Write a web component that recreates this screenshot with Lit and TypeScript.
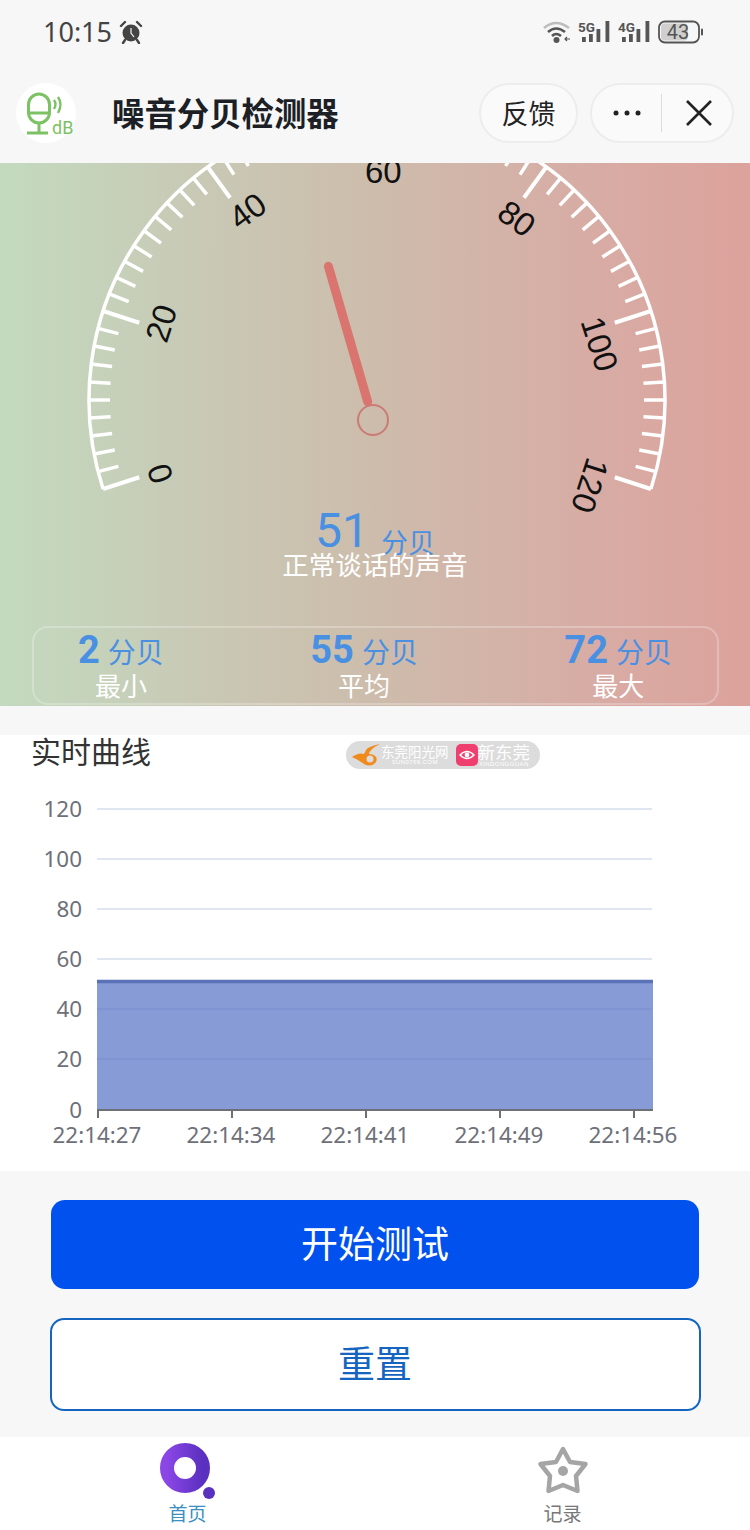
import { LitElement, css, html, svg } from 'lit';
import { customElement } from 'lit/decorators.js';

const CX = 377;
const CY = 400;
const R = 288;
const VALUE = 51;

const polar = (deg: number, r: number) => {
  const a = (deg * Math.PI) / 180;
  return { x: CX + r * Math.cos(a), y: CY - r * Math.sin(a) };
};
const angleOf = (v: number) => 198 - (v / 120) * 216;

const stats = [
  { value: '2', label: '最小' },
  { value: '55', label: '平均' },
  { value: '72', label: '最大' },
];

const yTicks = [
  { label: '120', y: 809 },
  { label: '100', y: 859 },
  { label: '80', y: 909 },
  { label: '60', y: 959 },
  { label: '40', y: 1009 },
  { label: '20', y: 1059 },
  { label: '0', y: 1110 },
];

const xTicks = [
  { label: '22:14:27', x: 98 },
  { label: '22:14:34', x: 232 },
  { label: '22:14:41', x: 366 },
  { label: '22:14:49', x: 500 },
  { label: '22:14:56', x: 634 },
];

const signal = [
  { x: 4, h: 5 },
  { x: 11, h: 8 },
  { x: 18.5, h: 13 },
  { x: 27.5, h: 21 },
];

@customElement('app-root')
export class AppRoot extends LitElement {
  static styles = css`
    :host {
      display: flex;
      flex-direction: column;
      width: 750px;
      height: 1530px;
      overflow: hidden;
      background: #f7f7f7;
      font-family: "Noto Sans CJK SC", "Noto Sans", sans-serif;
    }
    svg { display: block; }

    .status {
      height: 64px;
      display: flex;
      align-items: center;
      justify-content: space-between;
      padding: 0 46px 0 43px;
      color: #444;
    }
    .status-left, .status-right { display: flex; align-items: center; }
    .time { font-family: "Noto Sans", sans-serif; font-size: 27px; line-height: 32px; margin-right: 7px; }
    .status-right { gap: 7px; }

    .nav {
      height: 99px;
      box-sizing: border-box;
      display: flex;
      align-items: center;
      padding: 0 16px 1px 16px;
    }
    .logo {
      width: 60px;
      height: 60px;
      border-radius: 50%;
      background: #fff;
      margin-right: 36px;
      flex: none;
    }
    .nav-title {
      font-size: 32.4px;
      font-weight: 700;
      color: #1c1f26;
      line-height: 40px;
      padding-bottom: 2px;
      flex: 1;
    }
    .pill {
      height: 60px;
      box-sizing: border-box;
      border: 2px solid #ededed;
      border-radius: 30px;
      background: #fafafa;
      display: flex;
      align-items: center;
    }
    .feedback {
      width: 99px;
      justify-content: center;
      font-size: 27px;
      color: #222;
      margin-right: 12px;
      padding-bottom: 2px;
    }
    .capsule { width: 144px; }
    .capsule-cell { width: 70px; display: flex; justify-content: center; }
    .capsule-cell.close { padding-left: 4px; box-sizing: border-box; }
    .divider { width: 1px; height: 38px; background: #dcdcdc; }

    .gauge {
      height: 543px;
      overflow: hidden;
      display: flex;
      flex-direction: column;
      background: linear-gradient(to right, #c3dabf 0%, #c8cab6 25%, #cdbcab 50%, #d6aea6 75%, #dca29c 100%);
    }
    .gauge svg { overflow: visible; flex: none; }
    .reading {
      display: flex;
      justify-content: center;
      align-items: flex-end;
      gap: 12px;
      height: 50px;
      margin-top: 3px;
      color: #4a90e2;
    }
    .reading-value { font-family: Roboto, sans-serif; font-size: 48px; line-height: 50px; }
    .reading-unit { font-size: 27px; line-height: 28px; }
    .reading-text {
      margin-top: -7px;
      text-align: center;
      color: #fff;
      font-size: 26.5px;
      line-height: 30px;
    }
    .stats {
      margin: auto 31px 1px 32px;
      height: 79px;
      box-sizing: border-box;
      border: 2px solid rgba(255, 255, 255, 0.25);
      border-radius: 16px;
      display: flex;
      justify-content: space-between;
      padding: 1px 45px 0 44px;
    }
    .stat { display: flex; flex-direction: column; align-items: center; }
    .stat-top {
      display: flex;
      align-items: baseline;
      gap: 8px;
      color: #4a90e2;
      height: 43px;
      line-height: 43px;
    }
    .stat-value { font-family: Roboto, sans-serif; font-size: 38px; font-weight: 700; }
    .stat-unit { font-size: 28px; }
    .stat-label { color: #fff; font-size: 26px; line-height: 25px; }

    .card {
      margin-top: 29px;
      height: 436px;
      background: #fff;
    }
    .card-head {
      height: 35px;
      display: flex;
      align-items: flex-start;
      padding-left: 31px;
    }
    .card-title { font-size: 30px; line-height: 30px; color: #333; width: 120px; }
    .mark {
      margin: 6px 0 0 195px;
      width: 194px;
      height: 28px;
      box-sizing: border-box;
      border-radius: 14px;
      background: #dcdcdc;
      display: flex;
      align-items: center;
      padding-left: 5px;
      color: #fff;
    }
    .mark-block { display: flex; flex-direction: column; align-items: center; }
    .mark-cn { font-size: 13.5px; line-height: 15px; }
    .mark-cn.big { font-size: 17.5px; line-height: 18px; }
    .mark-en { font-family: "Liberation Sans", sans-serif; font-size: 6px; line-height: 7px; letter-spacing: 0.4px; }
    .mark-eye { margin: 0 0 0 7px; }

    .actions {
      flex: 1;
      display: flex;
      flex-direction: column;
      align-items: center;
      padding-top: 29px;
      gap: 29px;
    }
    .btn {
      box-sizing: border-box;
      display: flex;
      align-items: center;
      justify-content: center;
      border-radius: 14px;
      font-size: 37px;
      padding-bottom: 6px;
    }
    .btn-primary { width: 648px; height: 89px; background: #0051ee; color: #fff; }
    .btn-ghost { width: 651px; height: 93px; background: #fff; border: 2px solid #1565c0; color: #1565c0; }

    .tabs {
      height: 93px;
      background: #fff;
      display: grid;
      grid-template-columns: 375px 375px;
    }
    .tab { display: flex; flex-direction: column; align-items: center; padding-top: 5px; }
    .tab-label { font-size: 19px; line-height: 24px; margin-top: 2px; color: #777; }
    .tab-label.active { color: #3a8fc0; }
  `;

  private renderTicks() {
    const out = [];
    for (let i = 0; i <= 60; i++) {
      const deg = 198 - i * 3.6;
      const major = i % 10 === 0;
      const a = polar(deg, R);
      const b = polar(deg, R - (major ? 38 : 21));
      out.push(svg`<line x1=${a.x} y1=${a.y} x2=${b.x} y2=${b.y} stroke="#fff" stroke-width=${major ? 4 : 3.5}></line>`);
    }
    return out;
  }

  private renderGaugeLabels() {
    const out = [];
    for (let v = 0; v <= 120; v += 20) {
      const deg = angleOf(v);
      const p = polar(deg, 229);
      const rot = 90 - deg;
      out.push(svg`<text x=${p.x} y=${p.y} dx="-12" transform="rotate(${rot} ${p.x} ${p.y})" dominant-baseline="central"
        font-family="Liberation Sans, sans-serif" font-size="33" fill="#111">${v}</text>`);
    }
    return out;
  }

  private renderGauge() {
    const start = polar(198, R);
    const end = polar(-18, R);
    const hubX = 373;
    const hubY = 420;
    const a = (angleOf(VALUE) * Math.PI) / 180;
    return html`
      <svg width="750" height="340" viewBox="0 163 750 340">
        <path d="M${start.x} ${start.y} A${R} ${R} 0 1 1 ${end.x} ${end.y}" fill="none" stroke="#fff" stroke-width="3.5"></path>
        ${this.renderTicks()}
        ${this.renderGaugeLabels()}
        <line x1=${hubX + 19 * Math.cos(a)} y1=${hubY - 19 * Math.sin(a)} x2=${hubX + 160 * Math.cos(a)} y2=${hubY - 160 * Math.sin(a)}
          stroke="#d9746f" stroke-width="9" stroke-linecap="round"></line>
        <circle cx=${hubX} cy=${hubY} r="15" fill="none" stroke="#cb7b74" stroke-width="2"></circle>
      </svg>
    `;
  }

  private renderChart() {
    return html`
      <svg width="750" height="401" viewBox="0 770 750 401">
        ${yTicks.map(t => svg`
          <line x1="97" x2="652" y1=${t.y} y2=${t.y} stroke="#e0e6f1" stroke-width="2"></line>
          <text x="82" y=${t.y - 1} text-anchor="end" dominant-baseline="central" font-family="Noto Sans, sans-serif" font-size="22.4" fill="#6e7079">${t.label}</text>
        `)}
        <rect x="97" y="982" width="556" height="128" fill="#5470c6" fill-opacity="0.7"></rect>
        <line x1="97" x2="653" y1="981.500" y2="981.500" stroke="#5a72b8" stroke-width="3.5"></line>
        <line x1="97" x2="653" y1="1110" y2="1110" stroke="#6e7079" stroke-width="2"></line>
        ${xTicks.map(t => svg`
          <line x1=${t.x} x2=${t.x} y1="1110" y2="1118" stroke="#6e7079" stroke-width="2"></line>
          <text x=${t.x - 1} y="1134" text-anchor="middle" dominant-baseline="central" font-family="Noto Sans, sans-serif" font-size="22.4" fill="#6e7079">${t.label}</text>
        `)}
      </svg>
    `;
  }

  private renderSignal(label: string) {
    return html`
      <svg width="33" height="24" viewBox="0 0 33 24">
        <text x="0" y="12" font-family="Roboto, sans-serif" font-weight="700" font-size="13.5" fill="#555">${label}</text>
        ${signal.map(b => svg`<rect x=${b.x} y=${22 - b.h} width="3.800" height=${b.h} fill="#555"></rect>`)}
      </svg>
    `;
  }

  render() {
    return html`
      <div class="status">
        <div class="status-left">
          <span class="time">10:15</span>
          <svg width="24" height="24" viewBox="0 0 24 24">
            <circle cx="12" cy="13" r="8.5" fill="#444"></circle>
            <path d="M2 6 L6 2 M22 6 L18 2 M6 20 L4 23 M18 20 L20 23" stroke="#444" stroke-width="2.4" stroke-linecap="round"></path>
            <path d="M12 8 V13 L15 17" stroke="#f7f7f7" stroke-width="1.2" fill="none"></path>
          </svg>
        </div>
        <div class="status-right">
          <svg width="28" height="24" viewBox="0 0 28 24">
            <path d="M1 8 Q13 -2 26 8" stroke="#bdbdbd" stroke-width="2.6" fill="none"></path>
            <path d="M5 12 Q13 5 22 12" stroke="#555" stroke-width="2.6" fill="none"></path>
            <path d="M9 16 Q13 12 18 16" stroke="#555" stroke-width="2.6" fill="none"></path>
            <circle cx="13.5" cy="20" r="3" fill="#555"></circle>
            <path d="M22 19 h5 M24 17 l-2 2 2 2" stroke="#555" stroke-width="1.2" fill="none"></path>
          </svg>
          ${this.renderSignal('5G')}
          ${this.renderSignal('4G')}
          <svg width="46" height="24" viewBox="0 0 46 24">
            <rect x="1" y="1.500" width="40" height="21" rx="6" fill="none" stroke="#555" stroke-width="1.800"></rect>
            <rect x="3" y="3.500" width="27" height="17" rx="4" fill="#cfcfcf"></rect>
            <text x="20" y="18.500" text-anchor="middle" font-family="Roboto, sans-serif" font-size="20" fill="#555">43</text>
            <rect x="43" y="8.500" width="2" height="7" rx="1" fill="#555"></rect>
          </svg>
        </div>
      </div>

      <div class="nav">
        <div class="logo">
          <svg width="60" height="60" viewBox="0 0 60 60">
            <rect x="12.500" y="11" width="21" height="29" rx="10.500" fill="none" stroke="#7cc264" stroke-width="3"></rect>
            <path d="M12 30 H34 M23 40 V50 M11 50 H32" stroke="#7cc264" stroke-width="3" fill="none"></path>
            <path d="M38 17 Q41 21 38 26 M42 14 Q47 21 42 30" stroke="#7cc264" stroke-width="2.400" fill="none"></path>
            <text x="36" y="51" font-family="Roboto, sans-serif" font-size="18" fill="#7cc264">dB</text>
          </svg>
        </div>
        <div class="nav-title">噪音分贝检测器</div>
        <div class="pill feedback">反馈</div>
        <div class="pill capsule">
          <div class="capsule-cell">
            <svg width="28" height="6" viewBox="0 0 28 6">
              <circle cx="3" cy="3" r="2.500" fill="#222"></circle>
              <circle cx="14" cy="3" r="2.500" fill="#222"></circle>
              <circle cx="25" cy="3" r="2.500" fill="#222"></circle>
            </svg>
          </div>
          <div class="divider"></div>
          <div class="capsule-cell close">
            <svg width="26" height="26" viewBox="0 0 26 26">
              <path d="M1 1 L25 25 M25 1 L1 25" stroke="#222" stroke-width="2.600"></path>
            </svg>
          </div>
        </div>
      </div>

      <div class="gauge">
        ${this.renderGauge()}
        <div class="reading">
          <span class="reading-value">${VALUE}</span>
          <span class="reading-unit">分贝</span>
        </div>
        <div class="reading-text">正常谈话的声音</div>
        <div class="stats">
          ${stats.map(s => html`
            <div class="stat">
              <div class="stat-top">
                <span class="stat-value">${s.value}</span>
                <span class="stat-unit">分贝</span>
              </div>
              <div class="stat-label">${s.label}</div>
            </div>
          `)}
        </div>
      </div>

      <div class="card">
        <div class="card-head">
          <div class="card-title">实时曲线</div>
          <div class="mark">
            <svg width="30" height="26" viewBox="0 0 30 24">
              <path d="M1 14 Q8 9 13 11 Q15 3 29 1 Q19 6 18 11 Q28 12 25 19 Q20 25 13 21 Q8 17 1 14 Z" fill="#f08a1d"></path>
              <circle cx="19" cy="16" r="3.500" fill="#dcdcdc"></circle>
            </svg>
            <div class="mark-block">
              <span class="mark-cn">东莞阳光网</span>
              <span class="mark-en">SUN0769.COM</span>
            </div>
            <svg class="mark-eye" width="22" height="22" viewBox="0 0 22 22">
              <rect width="22" height="22" rx="5" fill="#ef3f6e"></rect>
              <path d="M4 11 Q11 4 18 11 Q11 18 4 11 Z" fill="none" stroke="#fff" stroke-width="1.400"></path>
              <circle cx="11" cy="11" r="2.400" fill="#fff"></circle>
            </svg>
            <div class="mark-block">
              <span class="mark-cn big">新东莞</span>
              <span class="mark-en">XINDONGGUAN</span>
            </div>
          </div>
        </div>
        ${this.renderChart()}
      </div>

      <div class="actions">
        <div class="btn btn-primary">开始测试</div>
        <div class="btn btn-ghost">重置</div>
      </div>

      <div class="tabs">
        <div class="tab">
          <svg width="60" height="57" viewBox="1 0 60 57">
            <defs>
              <linearGradient id="ring" x1="0" x2="1" y1="0" y2="0">
                <stop offset="0" stop-color="#8b46e6"></stop>
                <stop offset="1" stop-color="#5a30bf"></stop>
              </linearGradient>
            </defs>
            <circle cx="28" cy="26" r="18" fill="none" stroke="url(#ring)" stroke-width="14"></circle>
            <circle cx="52" cy="51" r="6" fill="#5a30bf"></circle>
          </svg>
          <span class="tab-label active">首页</span>
        </div>
        <div class="tab">
          <svg width="60" height="57" viewBox="0 0 60 57">
            <path d="M30 7 L37 20 L52.500 22 L43 34 L44.500 49 L30 43 L15.500 49 L17 34 L7.500 22 L23 20 Z" fill="none" stroke="#a5a5a5" stroke-width="4.500" stroke-linejoin="round"></path>
            <circle cx="30" cy="29" r="5" fill="#a5a5a5"></circle>
          </svg>
          <span class="tab-label">记录</span>
        </div>
      </div>
    `;
  }
}
